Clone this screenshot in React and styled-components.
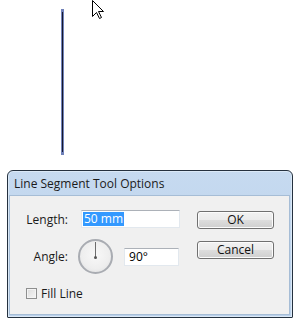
import styled, { createGlobalStyle } from 'styled-components'

const GlobalStyle = createGlobalStyle`
	html, body {
		margin: 0;
		padding: 0;
		background: #fff;
	}
	body {
		font-family: 'Open Sans', 'Liberation Sans', sans-serif;
		font-size: 12px;
		color: #000;
	}
`

const Page = styled.div`
	width: 305px;
	height: 328px;
	overflow: hidden;
	background: #fff;
`

const Canvas = styled.div`
	position: relative;
	height: 170px;
	padding-top: 9px;
	box-sizing: border-box;
`

const Segment = styled.div`
	margin-left: 61px;
	width: 3px;
	height: 146px;
	box-sizing: border-box;
	background: #15182e;
	border-left: 1px solid #7384bb;
	border-right: 1px solid #7384bb;
	border-top: 3px solid #6f80b8;
	border-bottom: 3px solid #6f80b8;
`

const Pointer = styled.svg`
	position: absolute;
	left: 92px;
	top: 0;
`

const Dialog = styled.div`
	margin-left: 7px;
	width: 286px;
	height: 148px;
	box-sizing: border-box;
	border: 1px solid #25313f;
	border-radius: 6px 6px 1px 1px;
	background: linear-gradient(#c6daf0, #b9d0ea);
	padding: 0 2px 2px 1px;
	display: flex;
	flex-direction: column;
	box-shadow: inset 0 0 0 1px #dbe9f7;
`

const TitleBar = styled.div`
	height: 24px;
	display: flex;
	align-items: center;
	padding-left: 5px;
	font-size: 12px;
	color: #1b1b1b;
`

const Client = styled.div`
	flex: 1;
	background: #f0f0f0;
	border: 1px solid #a6bdd6;
	display: flex;
`

const Fields = styled.div`
	width: 187px;
	display: flex;
	flex-direction: column;
	padding-top: 14px;
`

const Row = styled.div`
	display: flex;
	align-items: center;
	margin-top: ${(p) => p.$gap || 0}px;
`

const Label = styled.label`
	width: 58px;
	text-align: right;
	margin-right: ${(p) => p.$space}px;
	font-size: 12px;
	color: #1a1a1a;
`

const TextBox = styled.div`
	width: ${(p) => p.$w}px;
	height: 18px;
	box-sizing: border-box;
	background: #fff;
	border: 1px solid #e2e8ee;
	border-top-color: #acb1b8;
	padding-left: 1px;
	display: flex;
	align-items: center;
	font-size: 12px;
	margin-left: ${(p) => p.$ml || 0}px;
`

const Selected = styled.span`
	background: #3399ff;
	color: #fff;
	padding: 0 1px;
	line-height: 14px;
`

const Dial = styled.div`
	position: relative;
	width: 35px;
	height: 35px;
	box-sizing: border-box;
	border-radius: 50%;
	border: 2px solid #a9acb2;
	background: radial-gradient(circle at 50% 45%, #f8f8f8 0%, #eeeeee 60%, #d9dadc 100%);
`

const Needle = styled.div`
	position: absolute;
	left: 50%;
	top: 1px;
	width: 1px;
	height: 15px;
	margin-left: -0.5px;
	background: #6d6d6d;
	&::after {
		content: '';
		position: absolute;
		left: -1px;
		bottom: -2px;
		width: 3px;
		height: 3px;
		border-radius: 50%;
		background: #555;
	}
`

const CheckRow = styled.label`
	display: flex;
	align-items: center;
	margin-top: 11px;
	margin-left: 16px;
	font-size: 12px;
	gap: 4px;
	color: #1a1a1a;
`

const CheckBox = styled.span`
	width: 11px;
	height: 11px;
	box-sizing: border-box;
	border: 1px solid #8e8f8f;
	background: linear-gradient(135deg, #dcdcdc, #f6f6f6);
	box-shadow: inset 0 0 0 1px #f4f4f4;
`

const Buttons = styled.div`
	display: flex;
	flex-direction: column;
	gap: 12px;
	padding-top: 15px;
`

const Button = styled.button`
	width: 77px;
	height: 18px;
	box-sizing: border-box;
	border: 1px solid #707070;
	border-radius: 3px;
	background: linear-gradient(#f2f2f2 0%, #ebebeb 50%, #dddddd 51%, #cfcfcf 100%);
	font-family: 'Open Sans', 'Liberation Sans', sans-serif;
	font-size: 12px;
	line-height: 14px;
	color: #111;
	padding: 0;
	box-shadow: inset 0 0 0 1px #fcfcfc;
`

export default function App() {
	return (
		<Page>
			<GlobalStyle />
			<Canvas>
				<Segment />
				<Pointer width="13" height="20" viewBox="0 0 13 20">
					<path
						d="M0.5 0.5 L0.5 16.5 L4.5 12.5 L7.5 18.5 L9.5 17.5 L6.5 11.5 L11.5 11.5 Z"
						fill="#fff"
						stroke="#000"
						strokeWidth="1"
					/>
				</Pointer>
			</Canvas>
			<Dialog>
				<TitleBar>Line Segment Tool Options</TitleBar>
				<Client>
					<Fields>
						<Row>
							<Label $space={13}>Length:</Label>
							<TextBox $w={99}>
								<Selected>50 mm</Selected>
							</TextBox>
						</Row>
						<Row $gap={11}>
							<Label $space={10}>Angle:</Label>
							<Dial>
								<Needle />
							</Dial>
							<TextBox $w={55} $ml={11}>
								&nbsp;90°
							</TextBox>
						</Row>
						<CheckRow>
							<CheckBox />
							Fill Line
						</CheckRow>
					</Fields>
					<Buttons>
						<Button>OK</Button>
						<Button>Cancel</Button>
					</Buttons>
				</Client>
			</Dialog>
		</Page>
	)
}
